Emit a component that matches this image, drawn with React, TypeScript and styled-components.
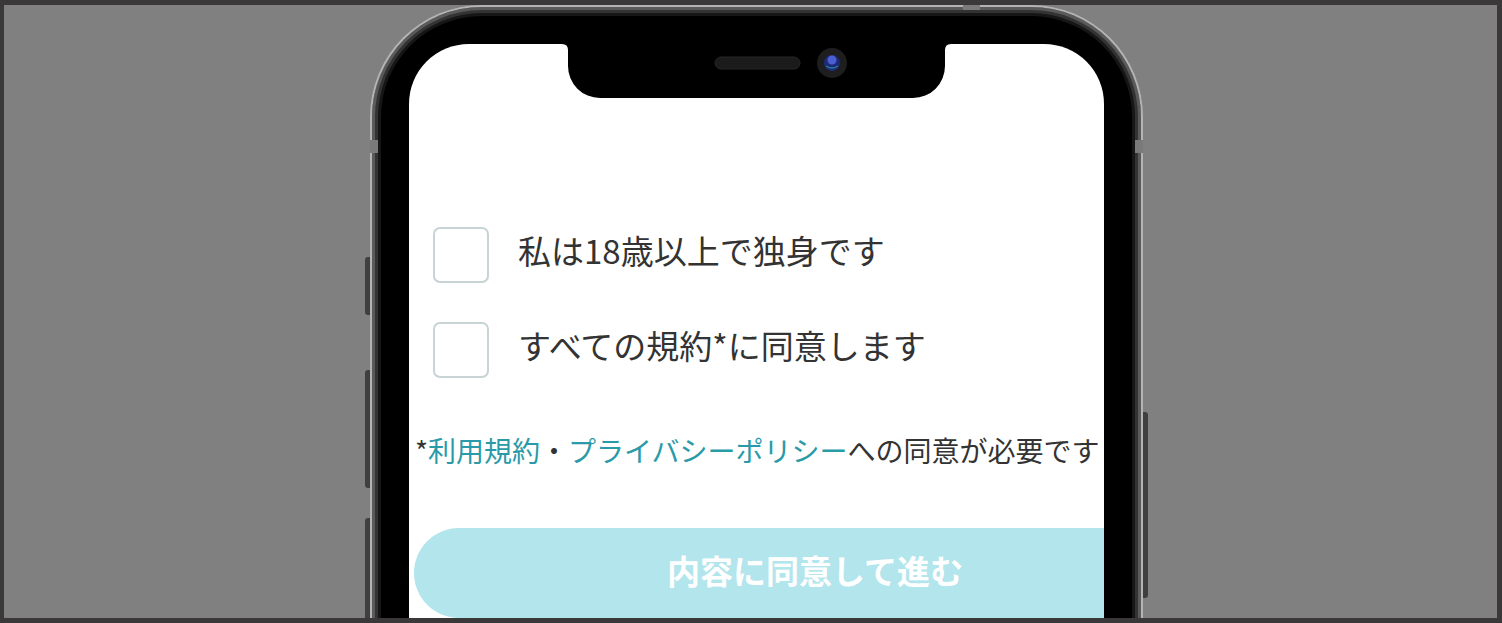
import React, { useState } from 'react';
import styled, { createGlobalStyle } from 'styled-components';

const GlobalStyle = createGlobalStyle`
  html, body {
    margin: 0;
    padding: 0;
    width: 1502px;
    height: 623px;
    overflow: hidden;
  }
  * {
    box-sizing: border-box;
  }
  body {
    font-family: "Noto Sans CJK JP", "Noto Sans", sans-serif;
  }
`

const Stage = styled.div`
  width: 1502px;
  height: 623px;
  background-color: #808080;
  border-style: solid;
  border-color: #3a3838;
  border-width: 5px 5px 5px 4px;
  overflow: hidden;
  padding-left: 366px;
`
const Phone = styled.div`
  position: relative;
  width: 773px;
  height: 720px;
  background-color: #000;
  border: 2px solid #b4b4b4;
  border-bottom: none;
  border-radius: 112px 112px 0 0;
  padding: 37px 37px 0;
  box-shadow: inset 0 0 0 3px #5a5a5a, inset 0 0 0 6px #333, inset 0 0 0 9px #161616;
`
// hardware buttons and antenna bands sit on the rim of the device
const SideButton = styled.div<{ $side: 'left' | 'right'; $top: number; $height: number }>`
  position: absolute;
  ${(p) => (p.$side === 'left' ? 'left: -7px;' : 'right: -7px;')}
  top: ${(p) => p.$top}px;
  width: 5px;
  height: ${(p) => p.$height}px;
  background-color: #3f3f3f;
  border-radius: ${(p) => (p.$side === 'left' ? '3px 0 0 3px' : '0 3px 3px 0')};
`
const Band = styled.div<{ $left?: number; $right?: number; $top: number; $w: number; $h: number }>`
  position: absolute;
  ${(p) => (p.$left !== undefined ? `left: ${p.$left}px;` : `right: ${p.$right}px;`)}
  top: ${(p) => p.$top}px;
  width: ${(p) => p.$w}px;
  height: ${(p) => p.$h}px;
  background-color: #7a7a7a;
`
const Screen = styled.div`
  position: relative;
  width: 695px;
  height: 700px;
  background-color: #ffffff;
  border-radius: 60px 60px 0 0;
  overflow: hidden;
`
const Notch = styled.svg`
  position: absolute;
  top: 0;
  left: 153px;
  z-index: 2;
`
const Content = styled.div`
  width: 812px;
  padding-top: 183px;
  display: flex;
  flex-direction: column;
`
const CheckRow = styled.label<{ $gap?: number }>`
  display: flex;
  align-items: center;
  gap: 29px;
  padding-left: 24px;
  margin-top: ${(p) => p.$gap ?? 0}px;
  cursor: pointer;
`
const Box = styled.span<{ $checked: boolean }>`
  flex: none;
  width: 56px;
  height: 56px;
  border: 2px solid #c7d3d4;
  border-radius: 7px;
  background-color: ${(p) => (p.$checked ? '#b3e5ec' : '#fff')};
`
const Label = styled.span`
  font-size: 33px;
  line-height: 1.2;
  padding-bottom: 8px;
  color: #333333;
  white-space: nowrap;
`
const Note = styled.p`
  margin: 53px 0 0;
  padding-left: 6px;
  font-size: 28px;
  line-height: 39px;
  color: #333333;
  white-space: nowrap;
`
const Link = styled.a`
  color: #2a9aa8;
  text-decoration: none;
`
const Submit = styled.button`
  margin: 58px 0 0 5px;
  width: 802px;
  height: 90px;
  padding: 0 0 6px;
  border: none;
  border-radius: 45px;
  background-color: #b3e5ec;
  color: #ffffff;
  font-family: inherit;
  font-size: 33px;
  font-weight: 700;
  cursor: not-allowed;
`

function App() {
  const [adult, setAdult] = useState(false);
  const [terms, setTerms] = useState(false);
  return (
    <>
      <GlobalStyle />
      <Stage>
        <Phone>
          <SideButton $side="left" $top={250} $height={58} />
          <SideButton $side="left" $top={363} $height={118} />
          <SideButton $side="left" $top={511} $height={200} />
          <SideButton $side="right" $top={405} $height={186} />
          <Band $left={-2} $top={133} $w={8} $h={13} />
          <Band $right={-2} $top={133} $w={8} $h={13} />
          <Band $left={591} $top={-4} $w={17} $h={7} />
          <Screen>
            <Notch width="389" height="54" viewBox="0 0 389 54">
              <path d="M0 0 H389 Q383 0 383 6 V22 A32 32 0 0 1 351 54 H38 A32 32 0 0 1 6 22 V6 Q6 0 0 0 Z" fill="#000" />
              <rect x="153" y="13" width="85" height="12" rx="6" fill="#1b1b1b" stroke="#262626" strokeWidth="1" />
              <circle cx="270" cy="19" r="15" fill="#1e1e1e" />
              <circle cx="270" cy="19" r="8" fill="#1d2a78" />
              <circle cx="270" cy="16" r="4.5" fill="#4a5fd0" />
              <path d="M264 22 Q270 26 276 22" stroke="#2d7f9a" strokeWidth="1.5" fill="none" />
            </Notch>
            <Content>
              <CheckRow onClick={() => setAdult(!adult)}>
                <Box $checked={adult} />
                <Label>私は18歳以上で独身です</Label>
              </CheckRow>
              <CheckRow $gap={39} onClick={() => setTerms(!terms)}>
                <Box $checked={terms} />
                <Label>すべての規約*に同意します</Label>
              </CheckRow>
              <Note>
                *<Link href="#">利用規約</Link>・<Link href="#">プライバシーポリシー</Link>への同意が必要です
              </Note>
              <Submit type="button">内容に同意して進む</Submit>
            </Content>
          </Screen>
        </Phone>
      </Stage>
    </>
  );
}

export default App;
